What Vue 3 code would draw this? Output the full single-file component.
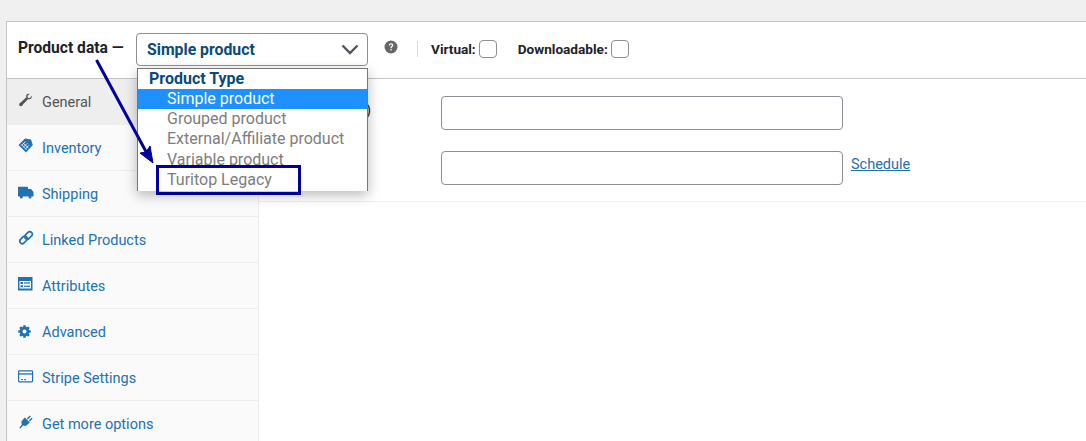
<script setup>
const tabs = [
  { label: 'General', icon: 'wrench', active: true },
  { label: 'Inventory', icon: 'tag' },
  { label: 'Shipping', icon: 'truck' },
  { label: 'Linked Products', icon: 'link' },
  { label: 'Attributes', icon: 'list' },
  { label: 'Advanced', icon: 'gear' },
  { label: 'Stripe Settings', icon: 'card' },
  { label: 'Get more options', icon: 'plug' },
]
const options = ['Simple product', 'Grouped product', 'External/Affiliate product', 'Variable product', 'Turitop Legacy']
</script>

<template>
  <div class="page">
    <section class="card">
      <header class="head">
        <strong class="title">Product data —</strong>
        <div class="select">
          <span>Simple product</span>
          <svg class="chev" width="18" height="11" viewBox="0 0 18 11"><path d="M1.500 1.500 9 9l7.500-7.500" fill="none" stroke="#50575e" stroke-width="2.400"/></svg>
        </div>
        <svg class="help" width="14" height="14" viewBox="0 0 14 14">
          <circle cx="7" cy="7" r="6.500" fill="#666"/>
          <path d="M4.800 5.400C4.900 4 5.900 3.300 7.100 3.300c1.300 0 2.200.8 2.200 1.900 0 1.700-1.800 1.600-1.800 3H6.300c0-2 1.700-2 1.700-2.900 0-.5-.4-.9-1-.9-.6 0-1 .4-1 1z" fill="#fff"/>
          <rect x="6.300" y="9" width="1.300" height="1.400" fill="#fff"/>
        </svg>
        <span class="sep"></span>
        <label class="check virtual">Virtual:<i class="box"></i></label>
        <label class="check">Downloadable:<i class="box"></i></label>
      </header>
      <div class="body">
        <nav class="side">
          <a v-for="t in tabs" :key="t.label" class="tab" :class="{ active: t.active }">
            <svg class="ico" width="16" height="16" viewBox="0 0 16 16">
              <path v-if="t.icon === 'wrench'" transform="translate(.3 1)" d="M13.500 2.700c.3 1.500-.3 2.800-1.500 3.300-.7.300-1.500.3-2.100 0L4.600 11.600c-.3 1.500-1.600 2.100-2.700 1.500-.5-.3-.9-.7-1-1.200-.3-1 .5-2.200 1.600-2.400L8 4.200c-.3-.7-.2-1.600.2-2.200C8.800 1 10 .6 11.300.9L9.100 3l.5 1.800 1.800.5z" fill="currentColor"/>
              <g v-else-if="t.icon === 'tag'">
                <path d="M.5 7 7 .5 13 1.500 14.800 7 8 14.500z" fill="currentColor"/>
                <path d="M3.500 7.500 7.500 3.500M5.300 9.300l4-4M7.100 11.100l4-4M5 4.800l5.500 5.500M3.300 6.500l5.500 5.500" stroke="#fff" stroke-width=".8"/>
              </g>
              <g v-else-if="t.icon === 'truck'" fill="currentColor">
                <rect x="0" y="2.700" width="10" height="9.800" rx=".6"/>
                <path d="M10 5h3l2.500 3v4.500H10z"/>
                <circle cx="3.300" cy="13" r="1.500"/><circle cx="12" cy="13" r="1.500"/>
              </g>
              <g v-else-if="t.icon === 'link'" fill="none" stroke="currentColor" stroke-width="1.700" transform="translate(0 .7)">
                <rect x="8" y=".5" width="5" height="8.500" rx="2.500" transform="rotate(45 10.500 4.750)"/>
                <rect x="3" y="5" width="5" height="8.500" rx="2.500" transform="rotate(45 5.500 9.250)"/>
              </g>
              <g v-else-if="t.icon === 'list'">
                <rect x="0" y="1" width="14.500" height="13.500" fill="currentColor"/>
                <rect x="1.500" y="5" width="11.500" height="7.500" fill="#fff"/>
                <rect x="2.500" y="6" width="2.500" height="2" fill="currentColor"/><rect x="2.500" y="9.300" width="2.500" height="2" fill="currentColor"/>
                <rect x="6" y="6.400" width="6" height="1.200" fill="currentColor"/><rect x="6" y="9.700" width="6" height="1.200" fill="currentColor"/>
              </g>
              <g v-else-if="t.icon === 'gear'" transform="translate(0 3)">
                <circle cx="6.500" cy="6.500" r="4.800" fill="currentColor"/>
                <path d="M6.500.3v12.400M.3 6.500h12.400M2.100 2.100l8.800 8.800M10.900 2.100l-8.800 8.800" stroke="currentColor" stroke-width="2.600"/>
                <circle cx="6.500" cy="6.500" r="2" fill="#fafafa"/>
              </g>
              <g v-else-if="t.icon === 'card'" transform="translate(0 1.300)">
                <rect x=".6" y="1.600" width="14" height="11" rx=".8" fill="none" stroke="currentColor" stroke-width="1.200"/>
                <rect x="1" y="4" width="13.500" height="1.300" fill="currentColor"/>
                <path d="M3 10.300h2M6 10.300h2" stroke="currentColor"/>
              </g>
              <g v-else fill="currentColor" transform="translate(.3 -.5)">
                <path d="M1 14.500 3.500 11 3 8 6.500 4l5 5-4 3.500-2.700-.5L2 15z"/>
                <path d="M8.500 5l3-3 1 1-3 3zM10.500 7l2.800-2.800 1 1L11.500 8z"/>
              </g>
            </svg>
            <span>{{ t.label }}</span>
          </a>
        </nav>
        <main class="main">
          <div class="fields">
            <div class="row">
              <span class="lab">)</span>
              <i class="input"></i>
            </div>
            <div class="row">
              <span class="lab"></span>
              <i class="input"></i>
              <a class="schedule">Schedule</a>
            </div>
          </div>
        </main>
      </div>
    </section>

    <div class="drop">
      <div class="group">Product Type</div>
      <div v-for="(o, i) in options" :key="o" class="opt" :class="{ sel: i === 0 }">{{ o }}</div>
    </div>
    <div class="mark"></div>
    <svg class="arrow" width="70" height="115" viewBox="0 0 70 115">
      <path d="M1.500 2 55 101" stroke="#00009c" stroke-width="3" fill="none"/>
      <path d="M58 105 45 95l6-1 4-6z" fill="#00009c" stroke="#00009c" stroke-width="1"/>
    </svg>
  </div>
</template>

<style>
html, body { margin: 0; background: #f0f0f1; }
</style>

<style scoped>
.page {
  position: relative;
  height: 441px;
  width: 1086px;
  overflow: hidden;
  padding: 21px 0 0 6px;
  box-sizing: border-box;
  background: #f0f0f1;
  font-family: Roboto, "Liberation Sans", sans-serif;
  font-size: 14.500px;
  color: #1d2327;
}
.card {
  width: 1100px;
  height: 440px;
  background: #fff;
  border: 1px solid #c3c4c7;
  box-sizing: border-box;
  display: flex;
  flex-direction: column;
}
.head {
  height: 57px;
  flex: none;
  box-sizing: border-box;
  border-bottom: 1px solid #c3c4c7;
  display: flex;
  align-items: center;
  padding-left: 11px;
}
.title { font-weight: 700; font-size: 15.600px; width: 118px; flex: none; margin-top: -4px; white-space: nowrap; }
.select {
  width: 232px;
  height: 33px;
  flex: none;
  box-sizing: border-box;
  border: 1px solid #8c8f94;
  border-radius: 4px;
  display: flex;
  align-items: center;
  justify-content: space-between;
  padding: 0 8px 0 10px;
  color: #0a4b78;
  font-size: 15.800px;
  font-weight: 700;
  margin-top: -1px;
}
.help { margin: -6px 0 0 16px; flex: none; }
.sep { width: 1px; height: 16px; background: #dcdcde; margin: -2px 13px 0 19px; flex: none; }
.check { display: flex; align-items: center; font-size: 13.600px; font-weight: 700; margin-top: -3px; }
.virtual { margin-right: 21px; }
.box {
  width: 18px;
  height: 18px;
  box-sizing: border-box;
  border: 1px solid #8c8f94;
  border-radius: 4px;
  margin-left: 3px;
  background: #fff;
}
.body { display: flex; flex: 1; min-height: 0; }
.side {
  width: 251px;
  flex: none;
  background: #fafafa;
  border-right: 1px solid #eee;
}
.tab {
  height: 46px;
  box-sizing: border-box;
  border-bottom: 1px solid #eee;
  display: flex;
  align-items: center;
  padding-left: 11px;
  color: #2271b1;
  gap: 8px;
}
.tab.active { background: #eee; color: #555; }
.tab .ico { flex: none; margin-top: -3px; }
.tab span { line-height: 16px; padding-top: 2px; }
.main { flex: 1; min-width: 0; }
.fields {
  height: 123px;
  box-sizing: border-box;
  border-bottom: 1px solid #eee;
  padding-top: 17px;
  display: flex;
  flex-direction: column;
  gap: 21px;
}
.row { display: flex; align-items: center; height: 34px; padding-left: 2px; }
.lab { width: 75px; padding-left: 105px; flex: none; white-space: nowrap; margin-bottom: 6px; }
.input {
  width: 402px;
  height: 34px;
  box-sizing: border-box;
  border: 1px solid #8c8f94;
  border-radius: 4px;
}
.schedule { margin-left: 8px; color: #2271b1; text-decoration: underline; margin-bottom: 8px; }
.drop {
  position: absolute;
  left: 137px;
  top: 68px;
  width: 231px;
  height: 123px;
  box-sizing: border-box;
  background: #fff;
  border: 1px solid #767676;
  border-bottom: 0;
  box-shadow: 0 4px 12px rgba(0, 0, 0, .28);
  font-size: 16px;
  line-height: 20.500px;
  overflow: hidden;
}
.group { font-weight: 700; color: #0a4b78; padding-left: 11px; height: 20px; }
.opt { padding-left: 29px; color: #7d7d7d; height: 20.200px; }
.opt.sel { background: #1e90ff; color: #fff; }
.mark {
  position: absolute;
  left: 156px;
  top: 165px;
  width: 145px;
  height: 30px;
  box-sizing: border-box;
  border: 3px solid #00009c;
}
.arrow { position: absolute; left: 95px; top: 58px; }
</style>
